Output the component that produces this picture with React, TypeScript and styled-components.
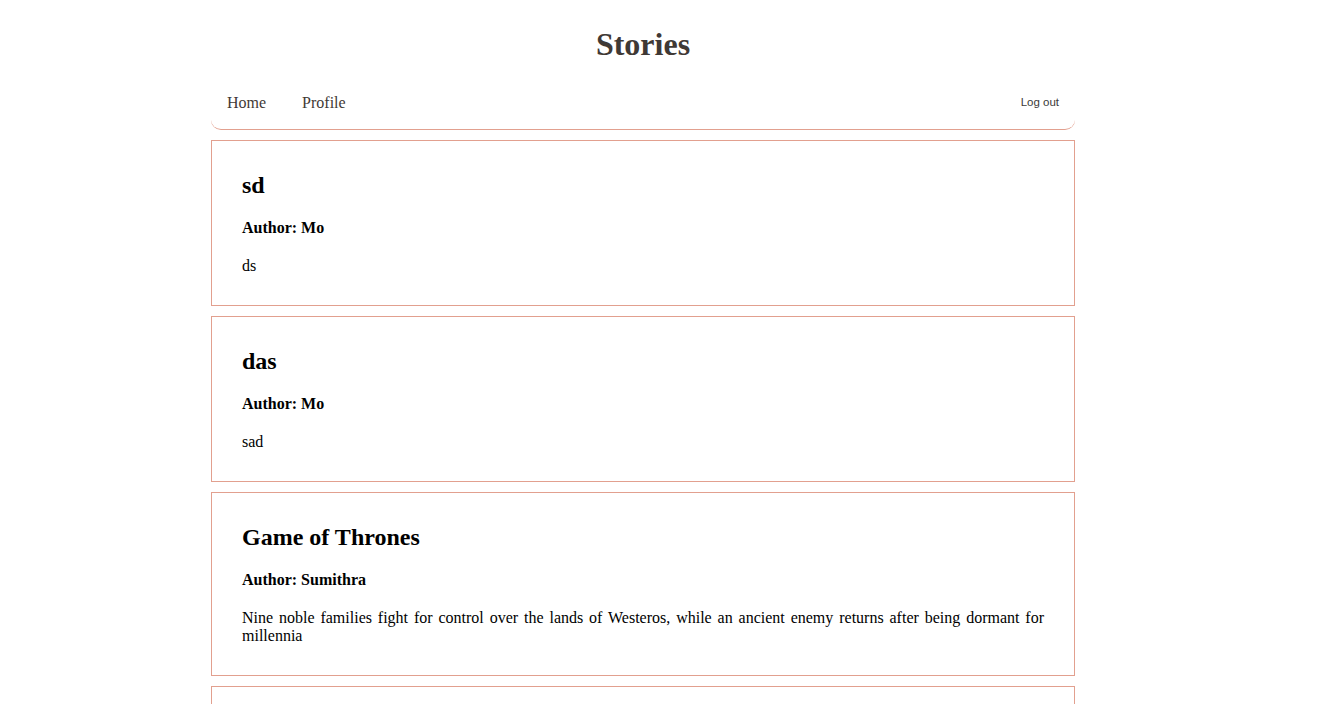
import React from "react";
import styled, { createGlobalStyle } from "styled-components";

const Global = createGlobalStyle`
  html, body {
    margin: 0;
    padding: 0;
    background: #ffffff;
    overflow: hidden;
  }
  body {
    font-family: "Liberation Serif", "Times New Roman", serif;
    font-size: 16px;
    color: #000;
  }
`;

const Shell = styled.div`
  width: 1286px;
`;

const Main = styled.div`
  width: 864px;
  margin: 0 auto;
`;

const Title = styled.h1`
  margin: 26px 0 14px;
  text-align: center;
  font-size: 32px;
  font-weight: bold;
  color: #3f3935;
`;

const Nav = styled.nav`
  display: flex;
  align-items: center;
  padding: 17px 16px;
  border-bottom: 1px solid #e2a08f;
  border-radius: 10px;
`;

const NavLink = styled.a`
  color: #3f3935;
  text-decoration: none;
  font-size: 16px;
  margin-right: 36px;
  cursor: pointer;
`;

const Spacer = styled.div`
  flex: 1;
`;

const LogoutButton = styled.button`
  font-family: "Liberation Sans", Arial, sans-serif;
  font-size: 11.5px;
  color: #3a3a3a;
  background: transparent;
  border: none;
  padding: 0;
  margin-right: 0;
  margin-bottom: 2px;
  cursor: pointer;
`;

const Card = styled.article`
  margin-top: 10px;
  padding: 11px 30px 10px;
  border: 1px solid #e2a08f;
  text-align: justify;
`;

const CardTitle = styled.h2`
  margin: 20px 0;
  font-size: 24px;
  font-weight: bold;
`;

const Author = styled.p`
  margin: 20px 0;
  font-weight: bold;
`;

const Body = styled.p`
  margin: 20px 0;
`;

const stories = [
  { title: "sd", author: "Mo", body: "ds" },
  { title: "das", author: "Mo", body: "sad" },
  {
    title: "Game of Thrones",
    author: "Sumithra",
    body:
      "Nine noble families fight for control over the lands of Westeros, while an ancient enemy returns after being dormant for millennia",
  },
  { title: "Stranger Things", author: "Mo", body: "When a young boy vanishes, a small town uncovers a mystery." },
];

export default function App() {
  return (
    <>
      <Global />
      <Shell>
        <Main>
          <Title>Stories</Title>
          <Nav>
            <NavLink>Home</NavLink>
            <NavLink>Profile</NavLink>
            <Spacer />
            <LogoutButton>Log out</LogoutButton>
          </Nav>
          {stories.map((s, i) => (
            <Card key={i}>
              <CardTitle>{s.title}</CardTitle>
              <Author>Author: {s.author}</Author>
              <Body>{s.body}</Body>
            </Card>
          ))}
        </Main>
      </Shell>
    </>
  );
}
